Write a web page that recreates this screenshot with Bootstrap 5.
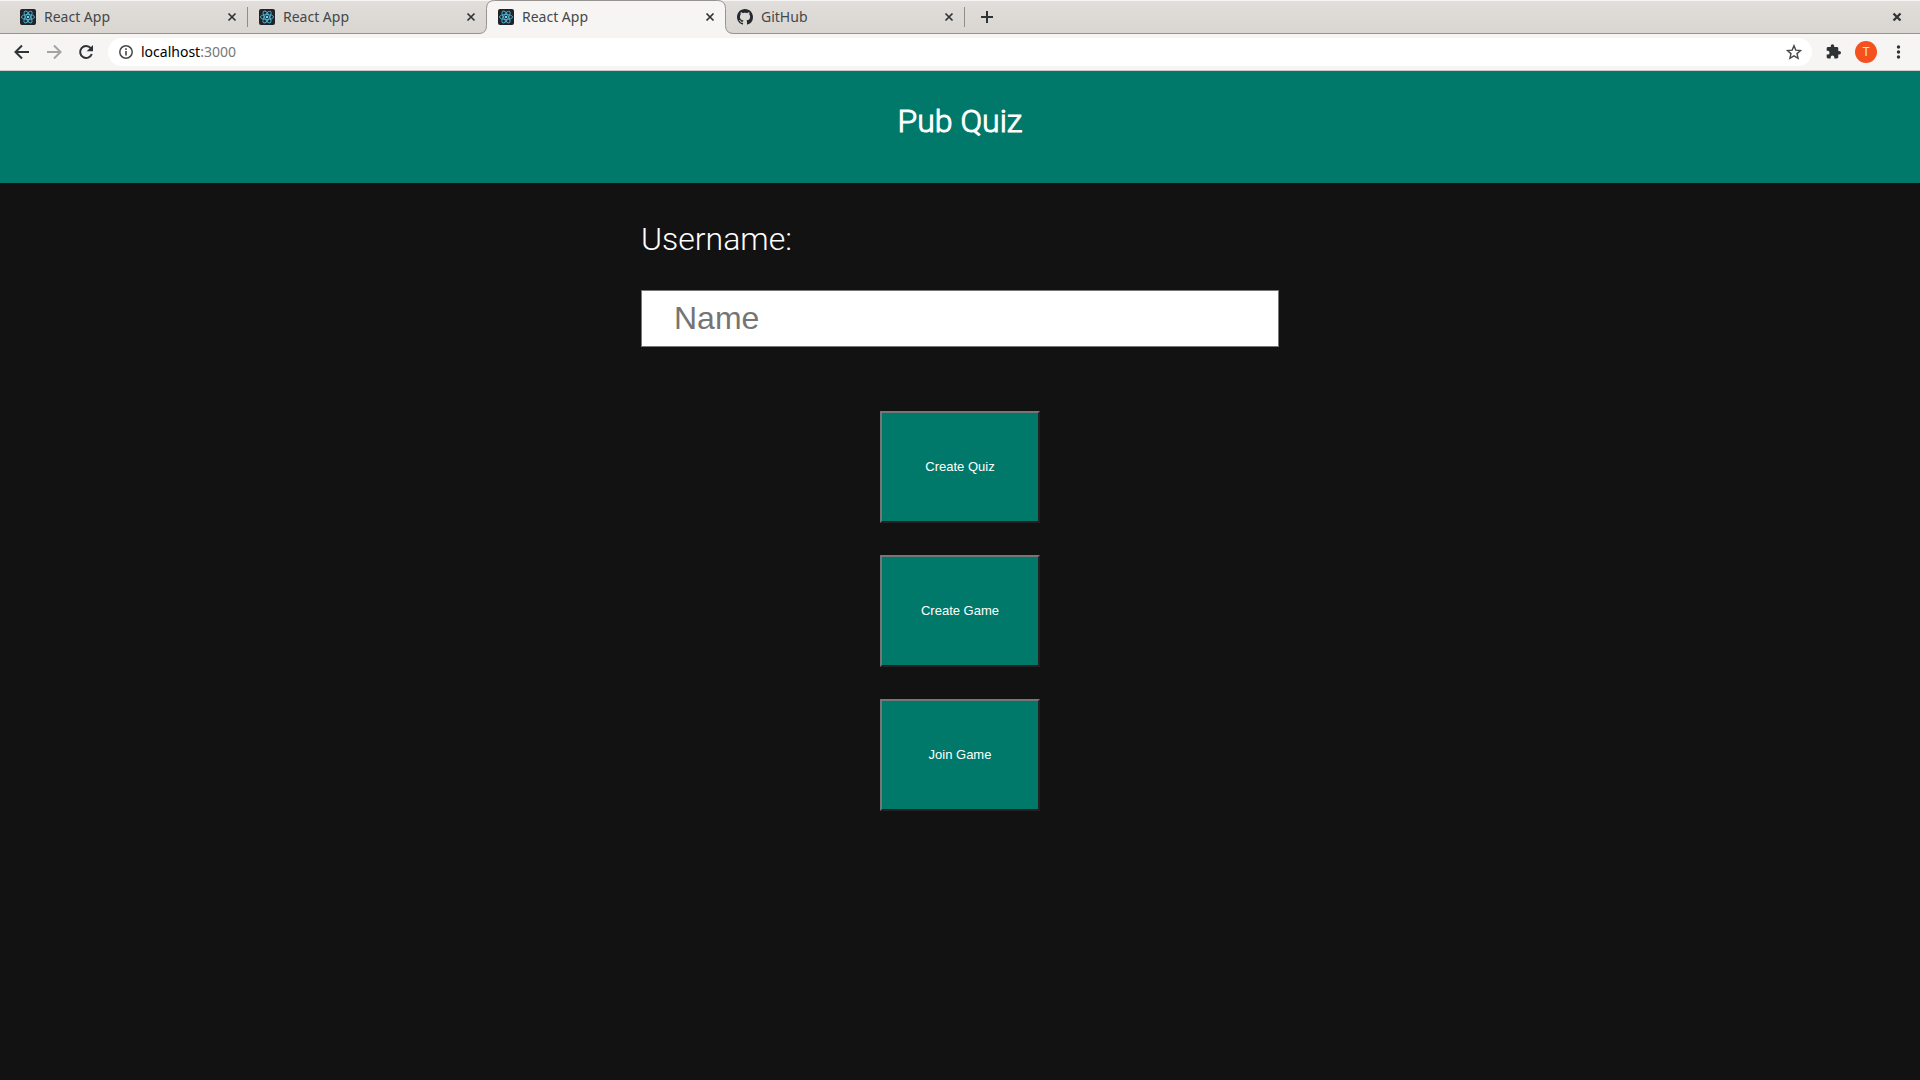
<!DOCTYPE html>
<html lang="en">
<head>
<meta charset="utf-8">
<meta name="viewport" content="width=device-width, initial-scale=1">
<title>React App</title>
<link href="https://cdn.jsdelivr.net/npm/bootstrap@5.3.0/dist/css/bootstrap.min.css" rel="stylesheet">
<style>
body { background: #121212; color: #fff; font-family: Roboto, sans-serif; }
svg { display: block; flex: none; }

/* Browser window */
.browser-ui { background: #f6f5f4; color: #2e3436; font-family: "Noto Sans", sans-serif; font-size: 14px; line-height: 20px; }
.browser-ui button { background: none; border: 0; padding: 0; color: inherit; }
.tab-strip { height: 34px; padding: 0 18px 0 9px; background: linear-gradient(#e1dedb, #d9d5d0); border-top: 1px solid #f6f5f4; border-bottom: 1px solid #969390; }
.tab-item { position: relative; flex: 0 1 239px; height: 33px; padding: 0 11px; }
.tab-item > * { position: relative; }
.tab-item a { color: #43484a; }
.tab-split::after { content: ""; position: absolute; right: 0; top: 6px; width: 1px; height: 20px; background: #8f8c89; }
.tab-item .tab-shape { position: absolute; left: -9px; top: -1px; }
.tool-row { height: 37px; padding: 0 16px 0 12px; border-bottom: 1px solid #cfccc8; }
.nav-buttons { gap: 12px; margin-right: 12px; }
.tool-buttons { gap: 14px; margin-left: 14px; }
.omnibox { height: 28px; border-radius: 14px; background: #fff; padding: 0 10px 0 11px; }
.url-port { color: #777; }
.browser-ui .avatar-dot { width: 22px; height: 22px; background: #f4511e; color: #fbe3dc; font-family: Roboto, sans-serif; font-size: 12px; }

/* Quiz page */
.quiz-header { background: #00796b; padding: 32px 16px 44px; }
.quiz-header h1 { font-size: 32px; line-height: 37px; height: 36px; font-weight: 300; -webkit-text-stroke: 1px #fff; }
.quiz-form { width: 100%; max-width: 638px; padding-top: 38px; }
.quiz-form label { font-size: 32px; line-height: 36px; font-weight: 300; margin-bottom: 33px; }
.name-input { height: 57px; border: 1px solid #767676; border-radius: 0; padding: 0 32px; font-family: "Liberation Sans", Arial, sans-serif; font-size: 32px; }
.name-input::placeholder { color: #757575; }
.quiz-actions { gap: 32px; margin-top: 64px; }
.quiz-btn { width: 160px; height: 112px; border: 2px solid; border-color: #767676 #212121 #212121 #767676; border-radius: 0; background: #00796b; color: #fff; font-family: "Liberation Sans", Arial, sans-serif; font-size: 13px; line-height: 16px; }
.quiz-btn:hover { background: #00695c; color: #fff; }
</style>
<script src="https://cdn.jsdelivr.net/npm/bootstrap@5.3.0/dist/js/bootstrap.bundle.min.js"></script>
</head>
<body>
<svg width="0" height="0" class="position-absolute" aria-hidden="true">
  <symbol id="react" viewBox="0 0 16 16">
    <rect width="16" height="16" rx="2" fill="#20232a"/>
    <g fill="none" stroke="#4fb3cf" stroke-width=".9">
      <ellipse cx="8" cy="8" rx="6.6" ry="2.5"/>
      <ellipse cx="8" cy="8" rx="6.6" ry="2.5" transform="rotate(60 8 8)"/>
      <ellipse cx="8" cy="8" rx="6.6" ry="2.5" transform="rotate(120 8 8)"/>
    </g>
    <circle cx="8" cy="8" r="1.3" fill="#61dafb"/>
  </symbol>
  <symbol id="cross" viewBox="0 0 10 10"><path d="M1.500 1.500l7 7M8.500 1.500l-7 7" stroke="currentColor" stroke-width="1.700"/></symbol>
</svg>

<div class="browser-ui">
  <nav class="tab-strip d-flex align-items-center" aria-label="Tabs">
    <div class="tab-item tab-split d-flex align-items-center">
      <svg width="16" height="16"><use href="#react"/></svg>
      <a href="#" class="ms-2 flex-grow-1 text-decoration-none">React App</a>
      <button type="button" aria-label="Close tab"><svg width="10" height="10"><use href="#cross"/></svg></button>
    </div>
    <div class="tab-item d-flex align-items-center">
      <svg width="16" height="16"><use href="#react"/></svg>
      <a href="#" class="ms-2 flex-grow-1 text-decoration-none">React App</a>
      <button type="button" aria-label="Close tab"><svg width="10" height="10"><use href="#cross"/></svg></button>
    </div>
    <div class="tab-item d-flex align-items-center">
      <svg class="tab-shape" width="257" height="34" viewBox="0 0 257 34" aria-hidden="true">
        <path d="M0 34V33.500Q8.500 33.500 8.500 25.500V8.500Q8.500 .5 16.500 .5H239.500Q247.500 .5 247.500 8.500V25.500Q247.500 33.500 255.500 33.500V34Z" fill="#f6f5f4"/>
        <path d="M0 33.500H1Q8.500 33.500 8.500 25.500V8.500Q8.500 .5 16.500 .5H239.500Q247.500 .5 247.500 8.500V25.500Q247.500 33.500 255.500 33.500H257" fill="none" stroke="#969390"/>
      </svg>
      <svg width="16" height="16"><use href="#react"/></svg>
      <a href="#" class="ms-2 flex-grow-1 text-decoration-none" aria-current="page">React App</a>
      <button type="button" aria-label="Close tab"><svg width="10" height="10"><use href="#cross"/></svg></button>
    </div>
    <div class="tab-item tab-split d-flex align-items-center">
      <svg width="16" height="16" viewBox="0 0 16 16" fill="#24292f"><path d="M8 0C3.580 0 0 3.580 0 8c0 3.540 2.290 6.530 5.470 7.590.4.070.55-.17.55-.38 0-.19-.01-.82-.01-1.490-2.010.37-2.530-.49-2.690-.94-.09-.23-.48-.94-.82-1.130-.28-.15-.68-.52-.01-.53.63-.01 1.080.58 1.230.82.72 1.210 1.870.87 2.330.66.070-.52.28-.87.51-1.070-1.780-.2-3.640-.89-3.640-3.950 0-.87.31-1.590.82-2.150-.08-.2-.36-1.020.08-2.120 0 0 .67-.21 2.200.82.64-.18 1.320-.27 2-.27s1.360.09 2 .27c1.530-1.040 2.200-.82 2.200-.82.44 1.100.16 1.920.08 2.120.51.56.82 1.270.82 2.150 0 3.070-1.870 3.750-3.650 3.950.29.25.54.73.54 1.480 0 1.070-.01 1.930-.01 2.200 0 .21.15.46.55.38A8.010 8.010 0 0 0 16 8c0-4.420-3.580-8-8-8z"/></svg>
      <a href="#" class="ms-2 flex-grow-1 text-decoration-none">GitHub</a>
      <button type="button" aria-label="Close tab"><svg width="10" height="10"><use href="#cross"/></svg></button>
    </div>
    <button type="button" class="ms-3" aria-label="New tab"><svg width="12" height="12" viewBox="0 0 12 12"><path d="M6 0v12M0 6h12" stroke="currentColor" stroke-width="2"/></svg></button>
    <button type="button" class="ms-auto" aria-label="Close window"><svg width="10" height="10" viewBox="0 0 10 10"><path d="M1.500 1.500l7 7M8.500 1.500l-7 7" stroke="currentColor" stroke-width="2.300"/></svg></button>
  </nav>

  <div class="tool-row d-flex align-items-center">
    <div class="nav-buttons d-flex">
      <button type="button" aria-label="Back"><svg width="20" height="20" viewBox="0 0 20 20" fill="none" stroke="currentColor" stroke-width="2"><path d="M17 10H4.500M10 3.500L3.500 10L10 16.500"/></svg></button>
      <button type="button" aria-label="Forward" disabled><svg width="20" height="20" viewBox="0 0 20 20" fill="none" stroke="#a3a3a2" stroke-width="2"><path d="M3 10H15.500M10 3.500L16.500 10L10 16.500"/></svg></button>
      <button type="button" aria-label="Reload"><svg width="20" height="20" viewBox="0 0 20 20"><path d="M14.800 6.200A6 6 0 1 0 15.800 12" fill="none" stroke="currentColor" stroke-width="2"/><path d="M17 3v6.300h-6.300z" fill="currentColor"/></svg></button>
    </div>
    <div class="omnibox d-flex align-items-center flex-grow-1">
      <svg width="14" height="14" viewBox="0 0 14 14"><circle cx="7" cy="7" r="6.200" fill="none" stroke="#45494c" stroke-width="1.500"/><path d="M7 6v4.500M7 3.200v1.700" stroke="#45494c" stroke-width="1.600"/></svg>
      <span class="ms-2 flex-grow-1"><span class="text-black">localhost</span><span class="url-port">:3000</span></span>
      <button type="button" aria-label="Bookmark this page"><svg width="16" height="16" viewBox="0 0 16 16"><path d="M8 1.700l1.800 4.400 4.800.4-3.600 3.100 1.100 4.700L8 11.800l-4.100 2.500L5 9.600 1.400 6.500l4.800-.4z" fill="none" stroke="#45494c" stroke-width="1.400"/></svg></button>
    </div>
    <div class="tool-buttons d-flex align-items-center">
      <button type="button" aria-label="Extensions"><svg width="15" height="16" viewBox="1 1 22 23"><path fill="currentColor" d="M20.500 11H19V7c0-1.100-.9-2-2-2h-4V3.500a2.500 2.500 0 0 0-5 0V5H4c-1.100 0-2 .9-2 2v3.800h1.500a2.700 2.700 0 0 1 0 5.400H2V20c0 1.100.9 2 2 2h3.800v-1.500a2.700 2.700 0 0 1 5.400 0V22H17c1.100 0 2-.9 2-2v-4h1.500a2.500 2.500 0 0 0 0-5z"/></svg></button>
      <button type="button" class="avatar-dot rounded-circle d-flex align-items-center justify-content-center" aria-label="Profile">T</button>
      <button type="button" aria-label="Menu"><svg width="13" height="14" viewBox="0 0 13 14" fill="currentColor"><circle cx="7.500" cy="2" r="1.700"/><circle cx="7.500" cy="7" r="1.700"/><circle cx="7.500" cy="12" r="1.700"/></svg></button>
    </div>
  </div>
</div>

<header class="quiz-header text-center">
  <h1 class="m-0">Pub Quiz</h1>
</header>
<main>
  <form class="quiz-form mx-auto">
    <label for="username" class="d-block">Username:</label>
    <input id="username" type="text" class="form-control name-input" placeholder="Name">
    <div class="quiz-actions d-flex flex-column align-items-center">
      <button type="button" class="btn quiz-btn">Create Quiz</button>
      <button type="button" class="btn quiz-btn">Create Game</button>
      <button type="button" class="btn quiz-btn">Join Game</button>
    </div>
  </form>
</main>
</body>
</html>
